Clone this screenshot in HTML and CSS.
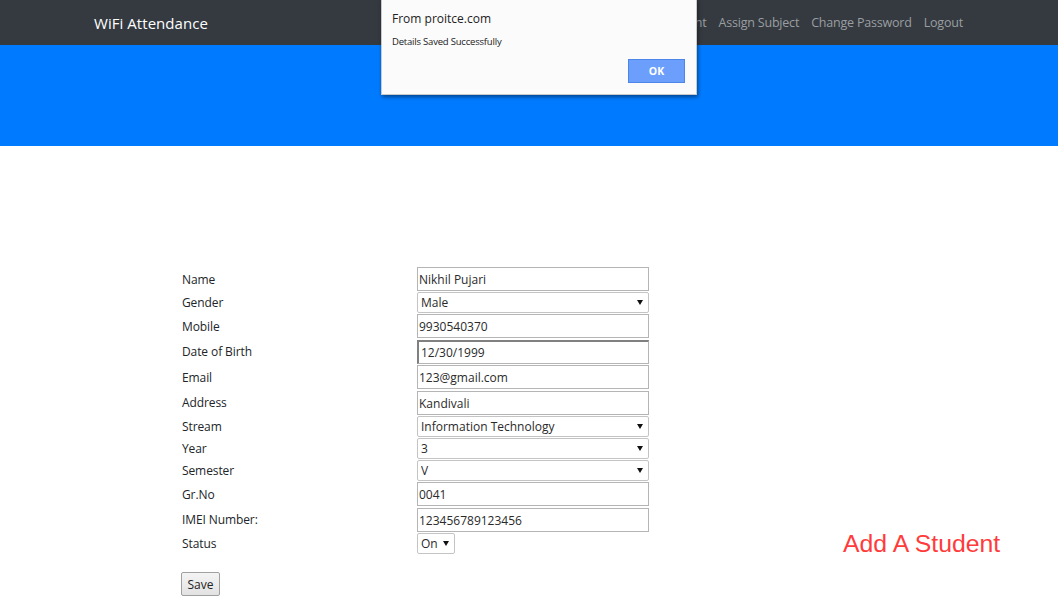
FILE: index.html
```html
<!DOCTYPE html>
<html lang="en">
<head>
<meta charset="utf-8">
<title>WiFi Attendance</title>
<link rel="stylesheet" href="styles.css">
</head>
<body>
<nav class="navbar">
  <a class="brand" href="#">WiFi Attendance</a>
  <ul class="nav-links">
    <li><a href="#">Home</a></li>
    <li><a href="#">Add Student</a></li>
    <li><a href="#">Assign Subject</a></li>
    <li><a href="#">Change Password</a></li>
    <li><a href="#">Logout</a></li>
  </ul>
</nav>
<header class="hero"></header>

<main class="content">
  <form class="student-form">
    <label class="lbl">Name</label>
    <div class="field"><input class="txt" type="text" value="Nikhil Pujari"></div>
    <span class="spacer"></span>

    <label class="lbl">Gender</label>
    <div class="field"><span class="sel-wrap"><select class="sel"><option>Male</option></select></span></div>
    <span class="spacer"></span>

    <label class="lbl">Mobile</label>
    <div class="field"><input class="txt" type="text" value="9930540370"></div>
    <span class="spacer"></span>

    <label class="lbl">Date of Birth</label>
    <div class="field loose"><input class="txt date" type="text" value="12/30/1999"></div>
    <span class="spacer"></span>

    <label class="lbl">Email</label>
    <div class="field"><input class="txt" type="text" value="123@gmail.com"></div>
    <span class="spacer"></span>

    <label class="lbl">Address</label>
    <div class="field loose"><input class="txt" type="text" value="Kandivali"></div>
    <span class="spacer"></span>

    <label class="lbl">Stream</label>
    <div class="field"><span class="sel-wrap"><select class="sel"><option>Information Technology</option></select></span></div>
    <span class="spacer"></span>

    <label class="lbl">Year</label>
    <div class="field"><span class="sel-wrap"><select class="sel"><option>3</option></select></span></div>
    <span class="spacer"></span>

    <label class="lbl">Semester</label>
    <div class="field"><span class="sel-wrap"><select class="sel"><option>V</option></select></span></div>
    <span class="spacer"></span>

    <label class="lbl">Gr.No</label>
    <div class="field"><input class="txt" type="text" value="0041"></div>
    <span class="spacer"></span>

    <label class="lbl">IMEI Number:</label>
    <div class="field loose"><input class="txt" type="text" value="123456789123456"></div>
    <span class="spacer"></span>

    <label class="lbl">Status</label>
    <div class="field"><span class="sel-wrap small"><select class="sel"><option>On</option></select></span></div>
    <h2 class="page-title">Add A Student</h2>

    <div class="actions"><button class="save" type="button">Save</button></div>
  </form>
</main>

<div class="dialog" role="alertdialog">
  <div class="dlg-title">From proitce.com</div>
  <div class="dlg-msg">Details Saved Successfully</div>
  <div class="dlg-foot"><button class="ok" type="button">OK</button></div>
</div>
</body>
</html>
```
FILE: styles.css
```css
* { box-sizing: border-box; }
html, body { margin: 0; padding: 0; }
body {
  font-family: "Open Sans", "Noto Sans", sans-serif;
  color: #212529;
  background: #fff;
  width: 1058px;
  height: 600px;
  overflow: hidden;
  position: relative;
}

.navbar {
  height: 45px;
  background: #343a40;
  display: flex;
  align-items: center;
  justify-content: space-between;
  padding: 0 89px 0 94px;
}
.brand {
  color: #fff;
  text-decoration: none;
  font-size: 15px;
  letter-spacing: 0.05px;
}
.nav-links {
  list-style: none;
  margin: 0;
  padding: 0;
  display: flex;
}
.nav-links a {
  display: block;
  color: #9b9ea1;
  text-decoration: none;
  font-size: 12.5px;
  padding: 0 6px;
  letter-spacing: -0.2px;
}

.hero {
  height: 101px;
  background: #007bff;
}

.content {
  padding: 121px 0 0 182px;
}
.student-form {
  display: grid;
  grid-template-columns: 235px 232px auto;
  row-gap: 1px;
  align-items: center;
  font-size: 12px;
}
.lbl {
  letter-spacing: -0.1px;
}
.field { display: flex; }
.field.loose { margin-top: 1px; }
.txt {
  width: 232px;
  height: 24px;
  border: 1px solid #b5b5b5;
  padding: 0 1px;
  font-family: inherit;
  font-size: 12px;
  color: #2a2a2a;
  background: #fff;
  outline: none;
}
.txt.date {
  border-top-color: #808080;
  border-left-color: #808080;
  border-left-width: 2px;
  border-top-width: 2px;
  padding-left: 2px;
}
.sel-wrap {
  position: relative;
  display: block;
  width: 232px;
}
.sel-wrap.small { width: 38px; }
.sel-wrap::after {
  content: "";
  position: absolute;
  right: 6px;
  top: 8px;
  border-left: 3px solid transparent;
  border-right: 3px solid transparent;
  border-top: 5px solid #111;
  pointer-events: none;
}
.sel {
  -webkit-appearance: none;
  appearance: none;
  width: 100%;
  height: 21px;
  border: 1px solid #c4c4c4;
  border-radius: 2px;
  background: #fff;
  padding: 0 14px 0 3px;
  font-family: inherit;
  font-size: 12px;
  color: #2a2a2a;
  outline: none;
}
.page-title {
  margin: 0 0 0 194px;
  font-family: "Liberation Sans", Arial, sans-serif;
  font-weight: normal;
  font-size: 24.8px;
  color: #ff3b3b;
  line-height: 21px;
  white-space: nowrap;
}
.actions {
  grid-column: 1 / -1;
  padding-top: 17px;
}
.save {
  width: 39px;
  height: 24px;
  margin-left: -1px;
  border: 1px solid #a0a0a0;
  border-radius: 2px;
  background: linear-gradient(#f4f4f4, #e2e2e2);
  font-family: inherit;
  font-size: 12px;
  color: #222;
  padding: 0;
}

.dialog {
  position: absolute;
  left: 381px;
  top: -2px;
  width: 316px;
  height: 97px;
  background: #fbfbfb;
  border: 1px solid #c9c9c9;
  box-shadow: 1px 2px 4px rgba(0, 0, 0, 0.45);
  padding: 10px 10px 0 10px;
}
.dlg-title {
  font-size: 12px;
  color: #222;
  line-height: 16px;
  margin-top: 2px;
}
.dlg-msg {
  font-size: 9.5px;
  color: #222;
  margin-top: 8px;
  line-height: 14px;
  letter-spacing: -0.2px;
}
.dlg-foot {
  display: flex;
  justify-content: flex-end;
  margin-top: 10px;
  padding-right: 1px;
}
.ok {
  width: 57px;
  height: 24px;
  background: #6b9ffb;
  border: 1px solid #4d86e8;
  color: #fff;
  font-family: inherit;
  font-weight: bold;
  font-size: 10.5px;
  padding: 0;
}
```
